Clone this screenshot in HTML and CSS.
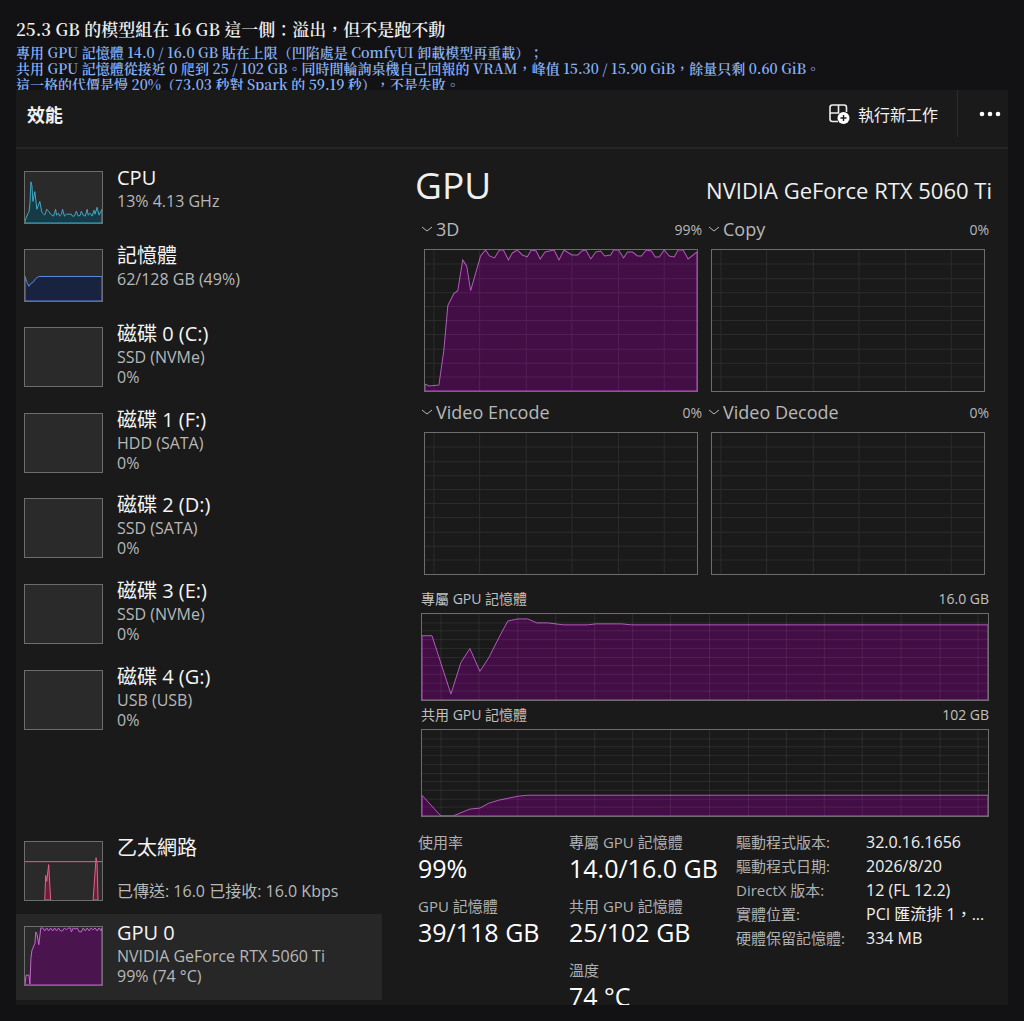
FILE: index.html
```html
<!DOCTYPE html>
<html lang="zh-Hant">
<head>
    <meta charset="UTF-8">
    <meta name="viewport" content="width=device-width, initial-scale=1.0">
    <title>效能 - GPU</title>
    <link rel="stylesheet" href="styles.css">
</head>
<body>
    <header class="caption">
        <h1>25.3 GB 的模型組在 16 GB 這一側：溢出，但不是跑不動</h1>
        <p>
            專用 GPU 記憶體 14.0 / 16.0 GB 貼在上限（凹陷處是 ComfyUI 卸載模型再重載）；<br>
            共用 GPU 記憶體從接近 0 爬到 25 / 102 GB。同時間輪詢桌機自己回報的 VRAM，峰值 15.30 / 15.90 GiB，餘量只剩 0.60 GiB。<br>
            這一格的代價是慢 20%（73.03 秒對 Spark 的 59.19 秒），不是失敗。
        </p>
    </header>

    <main class="panel">
        <div class="toolbar">
            <h2>效能</h2>
            <button class="run" type="button">
                <svg width="22" height="22" viewBox="0 0 22 22" aria-hidden="true">
                    <path d="M10 18.500H4.500a2.500 2.500 0 0 1-2.500-2.500V4.500a2.500 2.500 0 0 1 2.500-2.500h11.500a2.500 2.500 0 0 1 2.500 2.500V9M10.500 2v8M2 10h9" fill="none" stroke="#eee" stroke-width="1.600"/>
                    <circle cx="15.500" cy="15" r="6" fill="#fff"/>
                    <path d="M15.500 12v6M12.500 15h6" stroke="#1a1a1a" stroke-width="1.400"/>
                </svg>
                執行新工作
            </button>
            <button class="more" type="button" aria-label="更多">
                <svg width="22" height="6" viewBox="0 0 22 6" fill="#fff" aria-hidden="true">
                    <circle cx="3" cy="3" r="2.300"/><circle cx="11" cy="3" r="2.300"/><circle cx="19" cy="3" r="2.300"/>
                </svg>
            </button>
        </div>

        <div class="content">
            <nav class="sidebar">
                <button class="item" type="button">
                    <svg class="thumb cpu" viewBox="0 0 78 52" preserveAspectRatio="none" aria-hidden="true">
                        <path d="M0 52V50L3 42 4 41 5 32 6 10 7 14 8 30 10 20 12 38 15 30 17 41 20 44 22 38 24 40 26 43 29 45 31 38 32 44 34 42 35 45 37 43 38 38 40 45 42 43 47 43 48 45 50 45 52 40 54 45 56 44 57 40 59 44 61 45 63 38 64 44 66 42 68 45 70 39 71 43 73 36 75 44 78 38V52Z"/>
                    </svg>
                    <span class="text"><strong>CPU</strong><span>13% 4.13 GHz</span></span>
                </button>
                <button class="item" type="button">
                    <svg class="thumb mem" viewBox="0 0 78 52" preserveAspectRatio="none" aria-hidden="true">
                        <path d="M0 52V27L2 33 4 37 6 34 8 33 11 29 14 27H78V52Z"/>
                    </svg>
                    <span class="text"><strong>記憶體</strong><span>62/128 GB (49%)</span></span>
                </button>
                <button class="item" type="button">
                    <span class="thumb"></span>
                    <span class="text"><strong>磁碟 0 (C:)</strong><span>SSD (NVMe)</span><span>0%</span></span>
                </button>
                <button class="item" type="button">
                    <span class="thumb"></span>
                    <span class="text"><strong>磁碟 1 (F:)</strong><span>HDD (SATA)</span><span>0%</span></span>
                </button>
                <button class="item" type="button">
                    <span class="thumb"></span>
                    <span class="text"><strong>磁碟 2 (D:)</strong><span>SSD (SATA)</span><span>0%</span></span>
                </button>
                <button class="item" type="button">
                    <span class="thumb"></span>
                    <span class="text"><strong>磁碟 3 (E:)</strong><span>SSD (NVMe)</span><span>0%</span></span>
                </button>
                <button class="item" type="button">
                    <span class="thumb"></span>
                    <span class="text"><strong>磁碟 4 (G:)</strong><span>USB (USB)</span><span>0%</span></span>
                </button>
                <button class="item network" type="button">
                    <svg class="thumb net" viewBox="0 0 78 59" preserveAspectRatio="none" aria-hidden="true">
                        <path d="M0 20H78"/>
                        <path d="M20 59 21 34 22 40 24 23 26 59ZM69 59 72 16 73 22 74 59Z"/>
                    </svg>
                    <span class="text"><strong>乙太網路</strong><span>&nbsp;</span><span>已傳送: 16.0 已接收: 16.0 Kbps</span></span>
                </button>
                <button class="item selected" type="button">
                    <svg class="thumb gpu" viewBox="0 0 78 59" preserveAspectRatio="none" aria-hidden="true">
                        <path d="M0 59 1 49H4L5 58 6 32 7 24 9 19 10 17 11 5 12 7 14 18 16 1 18 1 20 4 22 1 24 4 26 1 28 4 30 1 32 4 34 1 36 4 38 4 40 1 42 3 44 1 46 1 47 5 49 1 51 2 53 1 55 5 57 5 59 1 61 4 63 1 65 4 67 1 69 3 71 1 73 4 75 1 77 4 78 1V59Z"/>
                    </svg>
                    <span class="text"><strong>GPU 0</strong><span>NVIDIA GeForce RTX 5060 Ti</span><span>99% (74 °C)</span></span>
                </button>
            </nav>

            <section class="detail">
                <div class="heading">
                    <h2>GPU</h2>
                    <p>NVIDIA GeForce RTX 5060 Ti</p>
                </div>

                <div class="engines">
                    <div class="engine">
                        <div class="engine-label">
                            <button type="button"><svg width="12" height="8" viewBox="0 0 12 8" aria-hidden="true"><path d="M1 2l5 4 5-4"/></svg>3D</button>
                            <span>99%</span>
                        </div>
                        <svg class="chart" viewBox="0 0 274 142" preserveAspectRatio="none" aria-hidden="true">
                            <path class="area" d="M0 142V135L4 137 14 136 19 101 23 56 29 44 33 41 38 10 42 16 46 41 56 6 61 0 65 6 70 8 75 0 79 0 84 10 88 3 93 0 98 5 103 7 107 0 112 1 116 9 121 2 130 0 135 10 140 0 148 5 154 5 158 1 162 0 167 9 172 2 177 1 181 6 187 5 190 0 195 0 200 8 204 2 209 2 214 6 218 6 223 0 228 1 232 7 236 7 241 0 246 6 251 7 255 0 260 0 265 9 274 2V142Z"/>
                            <path class="grid" d="M9 0V142M55 0V142M102 0V142M148 0V142M195 0V142M241 0V142M0 14H274M0 29H274M0 43H274M0 57H274M0 71H274M0 85H274M0 100H274M0 114H274M0 128H274"/>
                        </svg>
                    </div>
                    <div class="engine">
                        <div class="engine-label">
                            <button type="button"><svg width="12" height="8" viewBox="0 0 12 8" aria-hidden="true"><path d="M1 2l5 4 5-4"/></svg>Copy</button>
                            <span>0%</span>
                        </div>
                        <svg class="chart" viewBox="0 0 274 142" preserveAspectRatio="none" aria-hidden="true">
                            <path class="grid" d="M9 0V142M55 0V142M102 0V142M148 0V142M195 0V142M241 0V142M0 14H274M0 29H274M0 43H274M0 57H274M0 71H274M0 85H274M0 100H274M0 114H274M0 128H274"/>
                        </svg>
                    </div>
                    <div class="engine">
                        <div class="engine-label">
                            <button type="button"><svg width="12" height="8" viewBox="0 0 12 8" aria-hidden="true"><path d="M1 2l5 4 5-4"/></svg>Video Encode</button>
                            <span>0%</span>
                        </div>
                        <svg class="chart" viewBox="0 0 274 142" preserveAspectRatio="none" aria-hidden="true">
                            <path class="grid" d="M9 0V142M55 0V142M102 0V142M148 0V142M195 0V142M241 0V142M0 14H274M0 29H274M0 43H274M0 57H274M0 71H274M0 85H274M0 100H274M0 114H274M0 128H274"/>
                        </svg>
                    </div>
                    <div class="engine">
                        <div class="engine-label">
                            <button type="button"><svg width="12" height="8" viewBox="0 0 12 8" aria-hidden="true"><path d="M1 2l5 4 5-4"/></svg>Video Decode</button>
                            <span>0%</span>
                        </div>
                        <svg class="chart" viewBox="0 0 274 142" preserveAspectRatio="none" aria-hidden="true">
                            <path class="grid" d="M9 0V142M55 0V142M102 0V142M148 0V142M195 0V142M241 0V142M0 14H274M0 29H274M0 43H274M0 57H274M0 71H274M0 85H274M0 100H274M0 114H274M0 128H274"/>
                        </svg>
                    </div>
                </div>

                <div class="memory">
                    <div class="memory-label"><span>專屬 GPU 記憶體</span><span>16.0 GB</span></div>
                    <svg class="chart" viewBox="0 0 567 87" preserveAspectRatio="none" aria-hidden="true">
                        <path class="area" d="M0 87V22H10L29 81 39 49 48 35 58 58 67 44 77 24 86 7 96 5H106L115 9H126L142 11H166L174 10H200L210 11H567V87Z"/>
                        <path class="grid" d="M19 0V87M57 0V87M96 0V87M134 0V87M173 0V87M211 0V87M249 0V87M288 0V87M327 0V87M365 0V87M403 0V87M441 0V87M480 0V87M519 0V87M557 0V87M0 9H567M0 17H567M0 26H567M0 35H567M0 44H567M0 52H567M0 61H567M0 70H567M0 78H567"/>
                    </svg>
                    <div class="memory-label"><span>共用 GPU 記憶體</span><span>102 GB</span></div>
                    <svg class="chart" viewBox="0 0 567 87" preserveAspectRatio="none" aria-hidden="true">
                        <path class="area" d="M0 87V66L19 87H31L48 80 58 79 67 74 77 71 96 67 106 66H567V87Z"/>
                        <path class="grid" d="M19 0V87M57 0V87M96 0V87M134 0V87M173 0V87M211 0V87M249 0V87M288 0V87M327 0V87M365 0V87M403 0V87M441 0V87M480 0V87M519 0V87M557 0V87M0 9H567M0 17H567M0 26H567M0 35H567M0 44H567M0 52H567M0 61H567M0 70H567M0 78H567"/>
                    </svg>
                </div>

                <div class="stats">
                    <dl>
                        <dt>使用率</dt><dd>99%</dd>
                        <dt>GPU 記憶體</dt><dd>39/118 GB</dd>
                    </dl>
                    <dl>
                        <dt>專屬 GPU 記憶體</dt><dd>14.0/16.0 GB</dd>
                        <dt>共用 GPU 記憶體</dt><dd>25/102 GB</dd>
                        <dt>溫度</dt><dd>74 °C</dd>
                    </dl>
                    <table>
                        <tr><th scope="row">驅動程式版本:</th><td>32.0.16.1656</td></tr>
                        <tr><th scope="row">驅動程式日期:</th><td>2026/8/20</td></tr>
                        <tr><th scope="row">DirectX 版本:</th><td>12 (FL 12.2)</td></tr>
                        <tr><th scope="row">實體位置:</th><td>PCI 匯流排 1，...</td></tr>
                        <tr><th scope="row">硬體保留記憶體:</th><td>334 MB</td></tr>
                    </table>
                </div>
            </section>
        </div>
    </main>
</body>
</html>
```
FILE: styles.css
```css
* {
    box-sizing: border-box;
}
body {
    margin: 0;
    height: 100vh;
    padding: 16px;
    display: flex;
    flex-direction: column;
    background: #121214;
    color: #f0f0f0;
    font-family: "Open Sans", "Noto Sans CJK TC", sans-serif;
    font-size: 16px;
}
h1, h2, p, dl, dd {
    margin: 0;
}
button {
    background: none;
    border: none;
    padding: 0;
    color: inherit;
    font: inherit;
    text-align: left;
    cursor: pointer;
}

/* caption */
.caption {
    font-family: "Noto Serif CJK TC", "Noto Sans CJK TC", serif;
    white-space: nowrap;
    text-spacing-trim: space-all;
}
.caption h1 {
    font-size: 17px;
    line-height: 25px;
    font-weight: 600;
}
.caption p {
    margin-top: 3px;
    max-height: 46px;
    overflow: hidden;
    color: #8ab4f8;
    font-size: 14px;
    line-height: 16px;
    font-weight: 600;
}

/* window */
.panel {
    flex: 1;
    min-height: 0;
    display: flex;
    flex-direction: column;
    background: #1a1a1a;
    overflow: hidden;
}
.toolbar {
    flex: none;
    height: 59px;
    padding: 0 7px 10px 11px;
    display: flex;
    align-items: center;
    border-bottom: 2px solid #262626;
}
.toolbar h2 {
    flex: 1;
    font-size: 18px;
    font-weight: 600;
}
.run {
    display: flex;
    align-items: center;
    gap: 8px;
}
.more {
    display: flex;
    align-items: center;
    align-self: stretch;
    margin-left: 19px;
    padding-left: 21px;
    border-left: 1px solid #2c2c2c;
}
.content {
    flex: 1;
    min-height: 0;
    display: grid;
    grid-template-columns: 366px minmax(0, 1fr);
    grid-template-rows: minmax(0, 1fr);
}

/* sidebar */
.sidebar {
    display: grid;
    grid-template-rows: 78px 78px repeat(8, minmax(0, 1fr));
    padding: 10px 0 5px;
}
.item {
    display: flex;
    gap: 14px;
    padding: 12px 8px;
}
.network {
    grid-row: 9;
}
.selected {
    grid-row: 10;
    background: #272727;
}
.thumb {
    flex: none;
    width: 79px;
    height: 60px;
    border: 1px solid #6d6d6d;
    background: #2a2a2a;
}
.thumb path {
    stroke-width: 1px;
    vector-effect: non-scaling-stroke;
}
.cpu, .mem {
    height: 53px;
}
.cpu path {
    fill: #163a46;
    stroke: #3fa9c4;
}
.mem path {
    fill: #18233f;
    stroke: #5b8be0;
}
.net path {
    fill: #6a1f38;
    stroke: #e8608a;
}
.gpu path {
    fill: #4a154f;
    stroke: #c765d3;
}
.text {
    display: flex;
    flex-direction: column;
    margin-top: -6px;
    color: #b8b8b8;
    line-height: 20px;
    white-space: nowrap;
}
.text strong {
    color: #f5f5f5;
    font-size: 20px;
    font-weight: 400;
    line-height: 26px;
}

/* detail */
.detail {
    padding: 0 19px 0 33px;
}
.heading {
    height: 69px;
    display: flex;
    align-items: baseline;
    justify-content: space-between;
    margin-right: -3px;
    padding-top: 9px;
}
.heading h2 {
    font-size: 37px;
    font-weight: 400;
    line-height: 54px;
}
.heading p {
    font-size: 22px;
}
.engines {
    display: grid;
    grid-template-columns: 1fr 1fr;
    gap: 9px 6px;
    padding-left: 6px;
}
.engine-label {
    display: flex;
    align-items: center;
    justify-content: space-between;
    height: 22px;
    margin-bottom: 9px;
    color: #b8b8b8;
    font-size: 14px;
}
.engine-label button {
    display: flex;
    align-items: center;
    gap: 3px;
    font-size: 18px;
}
.engine-label path {
    fill: none;
    stroke: #b8b8b8;
}
.chart {
    display: block;
    width: 100%;
    height: 88px;
    border: 1px solid #6d6d6d;
}
.engine .chart {
    width: calc(100% - 7px);
    height: 143px;
    margin-left: 3px;
}
.area {
    fill: #430d45;
    stroke: #b458bd;
    vector-effect: non-scaling-stroke;
}
.grid {
    fill: none;
    stroke: rgba(255, 255, 255, 0.08);
    vector-effect: non-scaling-stroke;
}
.memory {
    padding: 14px 0 0 6px;
}
.memory-label {
    display: flex;
    justify-content: space-between;
    margin-bottom: 4px;
    color: #c0c0c0;
    font-size: 14px;
    line-height: 20px;
}
.chart + .memory-label {
    margin-top: 4px;
}

/* figures under the charts */
.stats {
    display: grid;
    grid-template-columns: 151px 167px minmax(0, 1fr);
    align-items: start;
    padding: 15px 0 0 3px;
    white-space: nowrap;
}
.stats dt {
    color: #b0b0b0;
    font-size: 15px;
    line-height: 20px;
}
.stats dd {
    margin-bottom: 12px;
    color: #fff;
    font-size: 25px;
    line-height: 32px;
}
.stats table {
    margin-top: -2px;
    border-collapse: collapse;
    line-height: 24px;
}
.stats th, .stats td {
    padding: 0;
    font-weight: 400;
    text-align: left;
}
.stats th {
    width: 130px;
    color: #b0b0b0;
    font-size: 15px;
}
```
